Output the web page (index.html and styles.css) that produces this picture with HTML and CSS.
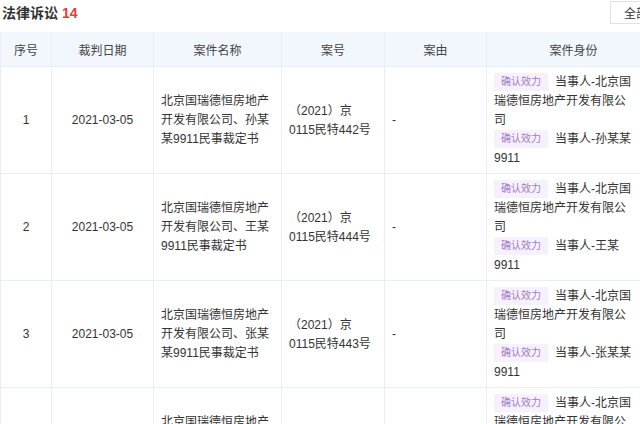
FILE: index.html
```html
<!DOCTYPE html>
<html lang="zh">
<head>
<meta charset="utf-8">
<link rel="stylesheet" href="styles.css">
</head>
<body>
<div class="page">
  <div class="titlebar">
    <h2 class="title">法律诉讼 <span class="count">14</span></h2>
    <button class="btn">全部</button>
  </div>
  <table class="grid">
    <colgroup>
      <col class="c1"><col class="c2"><col class="c3"><col class="c4"><col class="c5"><col class="c6">
    </colgroup>
    <thead>
      <tr><th>序号</th><th>裁判日期</th><th>案件名称</th><th>案号</th><th>案由</th><th>案件身份</th></tr>
    </thead>
    <tbody>
      <tr>
        <td class="center">1</td>
        <td class="center">2021-03-05</td>
        <td>北京国瑞德恒房地产开发有限公司、孙某某9911民事裁定书</td>
        <td>（2021）京0115民特442号</td>
        <td>-</td>
        <td>
          <div class="parties">
            <div class="party"><span class="tag">确认效力</span>当事人-北京国瑞德恒房地产开发有限公司</div>
            <div class="party"><span class="tag">确认效力</span>当事人-孙某某9911</div>
          </div>
        </td>
      </tr>
      <tr>
        <td class="center">2</td>
        <td class="center">2021-03-05</td>
        <td>北京国瑞德恒房地产开发有限公司、王某9911民事裁定书</td>
        <td>（2021）京0115民特444号</td>
        <td>-</td>
        <td>
          <div class="parties">
            <div class="party"><span class="tag">确认效力</span>当事人-北京国瑞德恒房地产开发有限公司</div>
            <div class="party"><span class="tag">确认效力</span>当事人-王某9911</div>
          </div>
        </td>
      </tr>
      <tr>
        <td class="center">3</td>
        <td class="center">2021-03-05</td>
        <td>北京国瑞德恒房地产开发有限公司、张某某9911民事裁定书</td>
        <td>（2021）京0115民特443号</td>
        <td>-</td>
        <td>
          <div class="parties">
            <div class="party"><span class="tag">确认效力</span>当事人-北京国瑞德恒房地产开发有限公司</div>
            <div class="party"><span class="tag">确认效力</span>当事人-张某某9911</div>
          </div>
        </td>
      </tr>
      <tr>
        <td class="center">4</td>
        <td class="center">2021-03-05</td>
        <td>北京国瑞德恒房地产开发有限公司、李某某9911民事裁定书</td>
        <td>（2021）京0115民特445号</td>
        <td>-</td>
        <td>
          <div class="parties">
            <div class="party"><span class="tag">确认效力</span>当事人-北京国瑞德恒房地产开发有限公司</div>
            <div class="party"><span class="tag">确认效力</span>当事人-李某某9911</div>
          </div>
        </td>
      </tr>
    </tbody>
  </table>
</div>
</body>
</html>
```

FILE: styles.css
```css
html, body {
  margin: 0;
  padding: 0;
  background: #fff;
}
body {
  font-family: "Liberation Sans", "Noto Sans CJK SC", sans-serif;
  font-size: 12px;
  color: #333;
  overflow: hidden;
  width: 640px;
  height: 424px;
}
.page {
  width: 700px;
}
.titlebar {
  display: flex;
  align-items: flex-start;
  justify-content: space-between;
  height: 32px;
}
.title {
  margin: 0;
  padding: 4px 0 0 2px;
  font-size: 14px;
  line-height: 18px;
  font-weight: bold;
  color: #333;
}
.count {
  color: #e83a3a;
}
.btn {
  margin: 1px 0 0 0;
  width: 90px;
  height: 23px;
  padding: 0 0 0 13px;
  text-align: left;
  border: 1px solid #e2e2e2;
  background: #fff;
  font-family: inherit;
  font-size: 12px;
  color: #333;
}
.grid {
  border-collapse: collapse;
  table-layout: fixed;
  width: 660px;
}
.c1 { width: 51px; }
.c2 { width: 102px; }
.c3 { width: 128px; }
.c4 { width: 103px; }
.c5 { width: 102px; }
.c6 { width: 174px; }
.grid th {
  background: #f2f7fd;
  font-weight: normal;
  color: #444;
  height: 34px;
  padding: 0;
  border: 1px solid #e9eef4;
  border-top: none;
}
.grid td {
  border: 1px solid #e9eef4;
  padding: 6px 7px 5px;
  line-height: 19px;
  vertical-align: middle;
}
.grid td.center {
  text-align: center;
}
.parties {
  width: 140px;
}
.party {
  line-height: 19px;
}
.tag {
  display: inline-block;
  height: 18px;
  line-height: 18px;
  padding: 0 7px;
  margin-right: 7px;
  font-size: 10px;
  color: #a17ccb;
  background: #f6f1fc;
  vertical-align: top;
}
```
